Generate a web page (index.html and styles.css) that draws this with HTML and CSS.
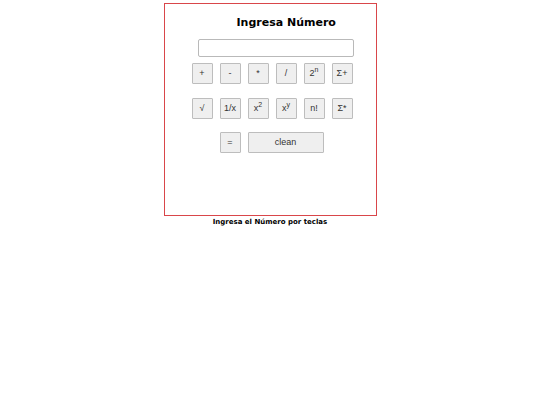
FILE: index.html
```html
<!DOCTYPE html>
<html lang="es">
<head>
<meta charset="utf-8">
<title>Calculadora</title>
<link rel="stylesheet" href="styles.css">
</head>
<body>
<div class="calc">
  <h1 class="title">Ingresa Número</h1>
  <input class="display" type="text">
  <div class="keys">
    <button class="key">+</button>
    <button class="key">-</button>
    <button class="key">*</button>
    <button class="key">/</button>
    <button class="key">2<sup>n</sup></button>
    <button class="key">Σ+</button>
  </div>
  <div class="keys">
    <button class="key">√</button>
    <button class="key">1/x</button>
    <button class="key">x<sup>2</sup></button>
    <button class="key">x<sup>y</sup></button>
    <button class="key">n!</button>
    <button class="key">Σ*</button>
  </div>
  <div class="keys keys-last">
    <button class="key">=</button>
    <button class="key key-wide">clean</button>
  </div>
</div>
<p class="hint">Ingresa el Número por teclas</p>
</body>
</html>
```

FILE: styles.css
```css
html, body {
  margin: 0;
  padding: 0;
  background: #fff;
}

body {
  padding-top: 3px;
  font-family: "Liberation Sans", Arial, sans-serif;
}

.calc {
  box-sizing: border-box;
  width: 213px;
  height: 213px;
  margin: 0 auto;
  border: 1px solid #d9464a;
  display: flex;
  flex-direction: column;
  align-items: flex-start;
}

.title {
  margin: 11px 0 0 72px;
  font-family: "DejaVu Sans", Verdana, sans-serif;
  font-weight: bold;
  font-size: 11px;
  line-height: 16px;
  color: #000;
}

.display {
  box-sizing: border-box;
  width: 156px;
  height: 18px;
  margin: 8px 0 0 33px;
  padding: 0 4px;
  border: 1px solid #b9b9b9;
  border-radius: 2px;
  background: #fff;
}

.keys {
  display: flex;
  gap: 7px;
  margin: 6px 0 8px 27px;
}

.keys-last {
  margin-top: 5px;
  margin-left: 55px;
}

.key {
  box-sizing: border-box;
  width: 21px;
  height: 21px;
  padding: 0;
  border: 1px solid #bdbdbd;
  border-radius: 1px;
  background: #efefef;
  color: #333;
  font-family: "Liberation Sans", Arial, sans-serif;
  font-size: 9px;
  line-height: 1;
}

.key sup {
  font-size: 7px;
  line-height: 0;
}

.key-wide {
  width: 76px;
  height: 21px;
}

.hint {
  margin: 2px 0 0;
  text-align: center;
  font-family: "DejaVu Sans", Verdana, sans-serif;
  font-weight: bold;
  font-size: 7px;
  color: #000;
}
```
